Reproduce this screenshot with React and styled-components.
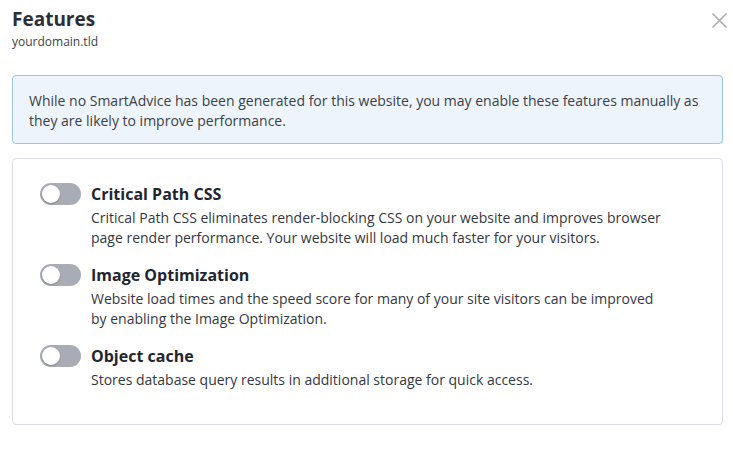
import React from "react";
import styled, { createGlobalStyle } from "styled-components";

const Global = createGlobalStyle`
  * { box-sizing: border-box; }
  body {
    margin: 0;
    background: #fff;
    font-family: "Open Sans", "Noto Sans", sans-serif;
    color: #343741;
  }
`;

const Page = styled.div`
  padding: 6px 10px 12px 12px;
  display: flex;
  flex-direction: column;
`;

const Header = styled.div`
  display: flex;
  justify-content: space-between;
  align-items: flex-start;
`;

const TitleBlock = styled.div`
  display: flex;
  flex-direction: column;
`;

const Title = styled.h1`
  margin: 0;
  font-size: 19px;
  line-height: 26px;
  font-weight: 700;
  color: #2b2e37;
`;

const Sub = styled.div`
  font-size: 12px;
  line-height: 16px;
  margin-top: 2px;
  color: #3a3f4b;
`;

const Close = styled.button`
  border: none;
  background: none;
  padding: 0;
  margin: 7px -4px 0 0;
  width: 15px;
  height: 15px;
  cursor: pointer;
  display: flex;
`;

const Info = styled.div`
  margin-top: 25px;
  background: #eef4fb;
  border: 1px solid #98c6f1;
  border-radius: 4px;
  padding: 15px 16px 12px 16px;
  font-size: 14px;
  line-height: 20px;
  color: #3b3f49;
`;

const Card = styled.div`
  margin-top: 14px;
  border: 1px solid #dddbe9;
  border-radius: 4px;
  padding: 23px 28px 34px 27px;
  display: flex;
  flex-direction: column;
  gap: 15px;
`;

const Row = styled.div`
  display: flex;
  gap: 10px;
  align-items: flex-start;
`;

const Track = styled.div`
  flex: none;
  width: 41px;
  height: 22px;
  border-radius: 11px;
  background: #a8acb5;
  position: relative;
  margin-top: 1px;
`;

const Knob = styled.div`
  position: absolute;
  left: 2px;
  top: 2px;
  width: 18px;
  height: 18px;
  border-radius: 50%;
  background: #fff;
  box-shadow: 0 1px 2px rgba(0, 0, 0, 0.25);
`;

const Texts = styled.div`
  display: flex;
  flex-direction: column;
`;

const FTitle = styled.div`
  font-size: 16px;
  line-height: 24px;
  font-weight: 700;
  color: #22252e;
`;

const Desc = styled.div`
  margin-top: 2px;
  font-size: 14px;
  line-height: 20px;
  color: #343741;
  max-width: 575px;
`;

const features = [
  {
    title: "Critical Path CSS",
    desc: "Critical Path CSS eliminates render-blocking CSS on your website and improves browser page render performance. Your website will load much faster for your visitors.",
  },
  {
    title: "Image Optimization",
    desc: "Website load times and the speed score for many of your site visitors can be improved by enabling the Image Optimization.",
  },
  {
    title: "Object cache",
    desc: "Stores database query results in additional storage for quick access.",
  },
];

export default function App() {
  return (
    <Page>
      <Global />
      <Header>
        <TitleBlock>
          <Title>Features</Title>
          <Sub>yourdomain.tld</Sub>
        </TitleBlock>
        <Close aria-label="Close">
          <svg width="15" height="15" viewBox="0 0 15 15">
            <path d="M1 1L14 14M14 1L1 14" stroke="#a9adb4" strokeWidth="1.7" strokeLinecap="round" />
          </svg>
        </Close>
      </Header>
      <Info>
        While no SmartAdvice has been generated for this website, you may enable these features manually as they are likely to improve performance.
      </Info>
      <Card>
        {features.map((f) => (
          <Row key={f.title}>
            <Track>
              <Knob />
            </Track>
            <Texts>
              <FTitle>{f.title}</FTitle>
              <Desc>{f.desc}</Desc>
            </Texts>
          </Row>
        ))}
      </Card>
    </Page>
  );
}
